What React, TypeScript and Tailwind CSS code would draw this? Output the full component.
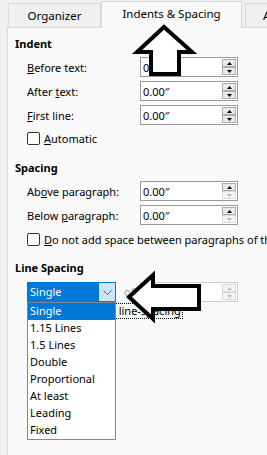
import React from "react";

const Tri = ({ up, color }: { up: boolean; color: string }) => (
  <svg width="5" height="3" viewBox="0 0 5 3">
    <path d={up ? "M2.5 0L5 3H0Z" : "M0 0H5L2.5 3Z"} fill={color} />
  </svg>
);

// windows style spin field: value + up/down buttons
const SpinField = ({
  value,
  downOff,
  disabled,
}: {
  value?: string;
  downOff?: boolean;
  disabled?: boolean;
}) => (
  <div
    className={`flex h-[20px] w-[98px] shrink-0 items-center justify-between pl-[2px] pr-[1px] ${
      disabled ? "border border-[#cccccc] bg-white" : "border border-[#9a9a9a] bg-white"
    }`}
  >
    <span className="leading-none">{value}</span>
    <div className="flex flex-col">
      <div
        className={`flex h-[8px] w-[14px] items-center justify-center border ${
          disabled ? "border-[#d9d9d9] bg-[#f4f4f4]" : "border-[#adadad] bg-[#e9e9e9]"
        }`}
      >
        <Tri up color={disabled ? "#bcbcbc" : "#000"} />
      </div>
      <div
        className={`flex h-[8px] w-[14px] items-center justify-center border ${
          disabled || downOff ? "border-[#d9d9d9] bg-[#f4f4f4]" : "border-[#adadad] bg-[#e9e9e9]"
        }`}
      >
        <Tri up={false} color={disabled || downOff ? "#bcbcbc" : "#000"} />
      </div>
    </div>
  </div>
);

const Row = ({
  label,
  value,
  downOff,
}: {
  label: React.ReactNode;
  value: string;
  downOff?: boolean;
}) => (
  <div className="flex h-[20px] items-center pl-[12px]">
    <span className="w-[113px] shrink-0 leading-none">{label}</span>
    <SpinField value={value} downOff={downOff} />
  </div>
);

const Check = ({ children }: { children: React.ReactNode }) => (
  <div className="flex h-[16px] items-center gap-[4px] whitespace-nowrap pl-[12px]">
    <span className="h-[13px] w-[13px] shrink-0 rounded-[2px] border border-[#333] bg-white" />
    <span className="leading-none">{children}</span>
  </div>
);

const Heading = ({ children }: { children: React.ReactNode }) => (
  <div className="flex h-[16px] items-center font-bold leading-none">{children}</div>
);

const options = [
  "Single",
  "1.15 Lines",
  "1.5 Lines",
  "Double",
  "Proportional",
  "At least",
  "Leading",
  "Fixed",
];

export default function App() {
  return (
    <div className="relative h-[455px] w-[267px] overflow-hidden bg-[#f0f0f0] font-['Noto_Sans',sans-serif] text-[11px] text-black">
      {/* tabs */}
      <div className="flex h-[27px] items-end pl-[8px] text-[11.5px]">
        <div className="flex h-[24px] w-[93px] shrink-0 items-center justify-center border border-b-0 border-[#d9d9d9] bg-[#f0f0f0] pt-[1px]">
          Organizer
        </div>
        <div className="relative z-10 -mb-px flex h-[27px] w-[141px] shrink-0 items-center justify-center border border-b-0 border-[#d9d9d9] bg-[#f9f9f9] pb-[3px]">
          Indents &amp; Spacing
        </div>
        <div className="ml-[3px] flex h-[24px] w-[40px] shrink-0 items-center border border-b-0 border-[#d9d9d9] bg-[#f0f0f0] pl-[17px] pt-[1px]">
          A
        </div>
      </div>

      {/* panel */}
      <div className="ml-[7px] h-[428px] border-l border-t border-[#d9d9d9] bg-[#f9f9f9] pl-[7px] pt-[7px]">
        <Heading>Indent</Heading>
        <div className="mt-[6px] flex flex-col gap-[4px]">
          <Row
            label={
              <>
                <u>B</u>efore text:
              </>
            }
            value="0"
          />
          <Row
            label={
              <>
                After <u>t</u>ext:
              </>
            }
            value="0.00″"
          />
          <Row
            label={
              <>
                <u>F</u>irst line:
              </>
            }
            value="0.00″"
          />
        </div>
        <div className="mt-[5px]">
          <Check>
            <u>A</u>utomatic
          </Check>
        </div>

        <div className="mt-[13px]">
          <Heading>Spacing</Heading>
        </div>
        <div className="mt-[6px] flex flex-col gap-[4px]">
          <Row
            label={
              <>
                Ab<u>o</u>ve paragraph:
              </>
            }
            value="0.00″"
            downOff
          />
          <Row
            label={
              <>
                Below <u>p</u>aragraph:
              </>
            }
            value="0.00″"
            downOff
          />
        </div>
        <div className="mt-[6px]">
          <Check>
            <u>D</u>o not add space between paragraphs of the same style
          </Check>
        </div>

        <div className="mt-[12px]">
          <Heading>Line Spacing</Heading>
        </div>
        <div className="mt-[7px] flex h-[20px] items-center pl-[12px]">
          <div className="relative z-10 flex h-[20px] w-[89px] shrink-0 border border-[#0078d7] bg-white">
            <div className="flex flex-1 items-center bg-[#0078d7] pl-[2px] text-white">
              Single
            </div>
            <div className="flex w-[17px] items-center justify-center border-l border-[#0078d7] bg-[#cce4f7]">
              <svg width="9" height="5" viewBox="0 0 9 5">
                <path d="M0.5 0.5L4.5 4.5L8.5 0.5" fill="none" stroke="#606060" strokeWidth="1" />
              </svg>
            </div>
            {/* open list */}
            <div className="absolute left-[-1px] top-[19px] w-[89px] border border-[#828790] bg-white">
              {options.map((o, i) => (
                <div
                  key={o}
                  className={`flex h-[17px] items-center pl-[2px] ${
                    i === 0 ? "bg-[#0078d7] text-white" : ""
                  }`}
                >
                  {o}
                </div>
              ))}
            </div>
          </div>
          <span className="ml-[8px] w-[16px] shrink-0 text-[#a0a0a0]">of</span>
          <SpinField disabled />
        </div>
        <div className="mt-[1px] flex h-[16px] items-center gap-[4px] whitespace-nowrap pl-[12px]">
          <span className="h-[13px] w-[13px] shrink-0 rounded-[2px] border border-[#333] bg-white" />
          <span className="border border-dotted border-black px-[1px] leading-[14px]">
            Activate page line-spacing
          </span>
        </div>
      </div>

      {/* annotation arrows drawn over the dialog */}
      <svg className="pointer-events-none absolute left-0 top-0 z-20" width="267" height="455">
        <polygon
          points="164,27 192,52 179,52 179,74 151,74 151,52 137,52"
          fill="#fff"
          stroke="#000"
          strokeWidth="4"
          strokeLinejoin="miter"
        />
        <polygon
          points="129,297 153,275 153,286 199,286 199,309 153,309 153,319"
          fill="#fff"
          stroke="#000"
          strokeWidth="4"
          strokeLinejoin="miter"
        />
      </svg>
    </div>
  );
}
